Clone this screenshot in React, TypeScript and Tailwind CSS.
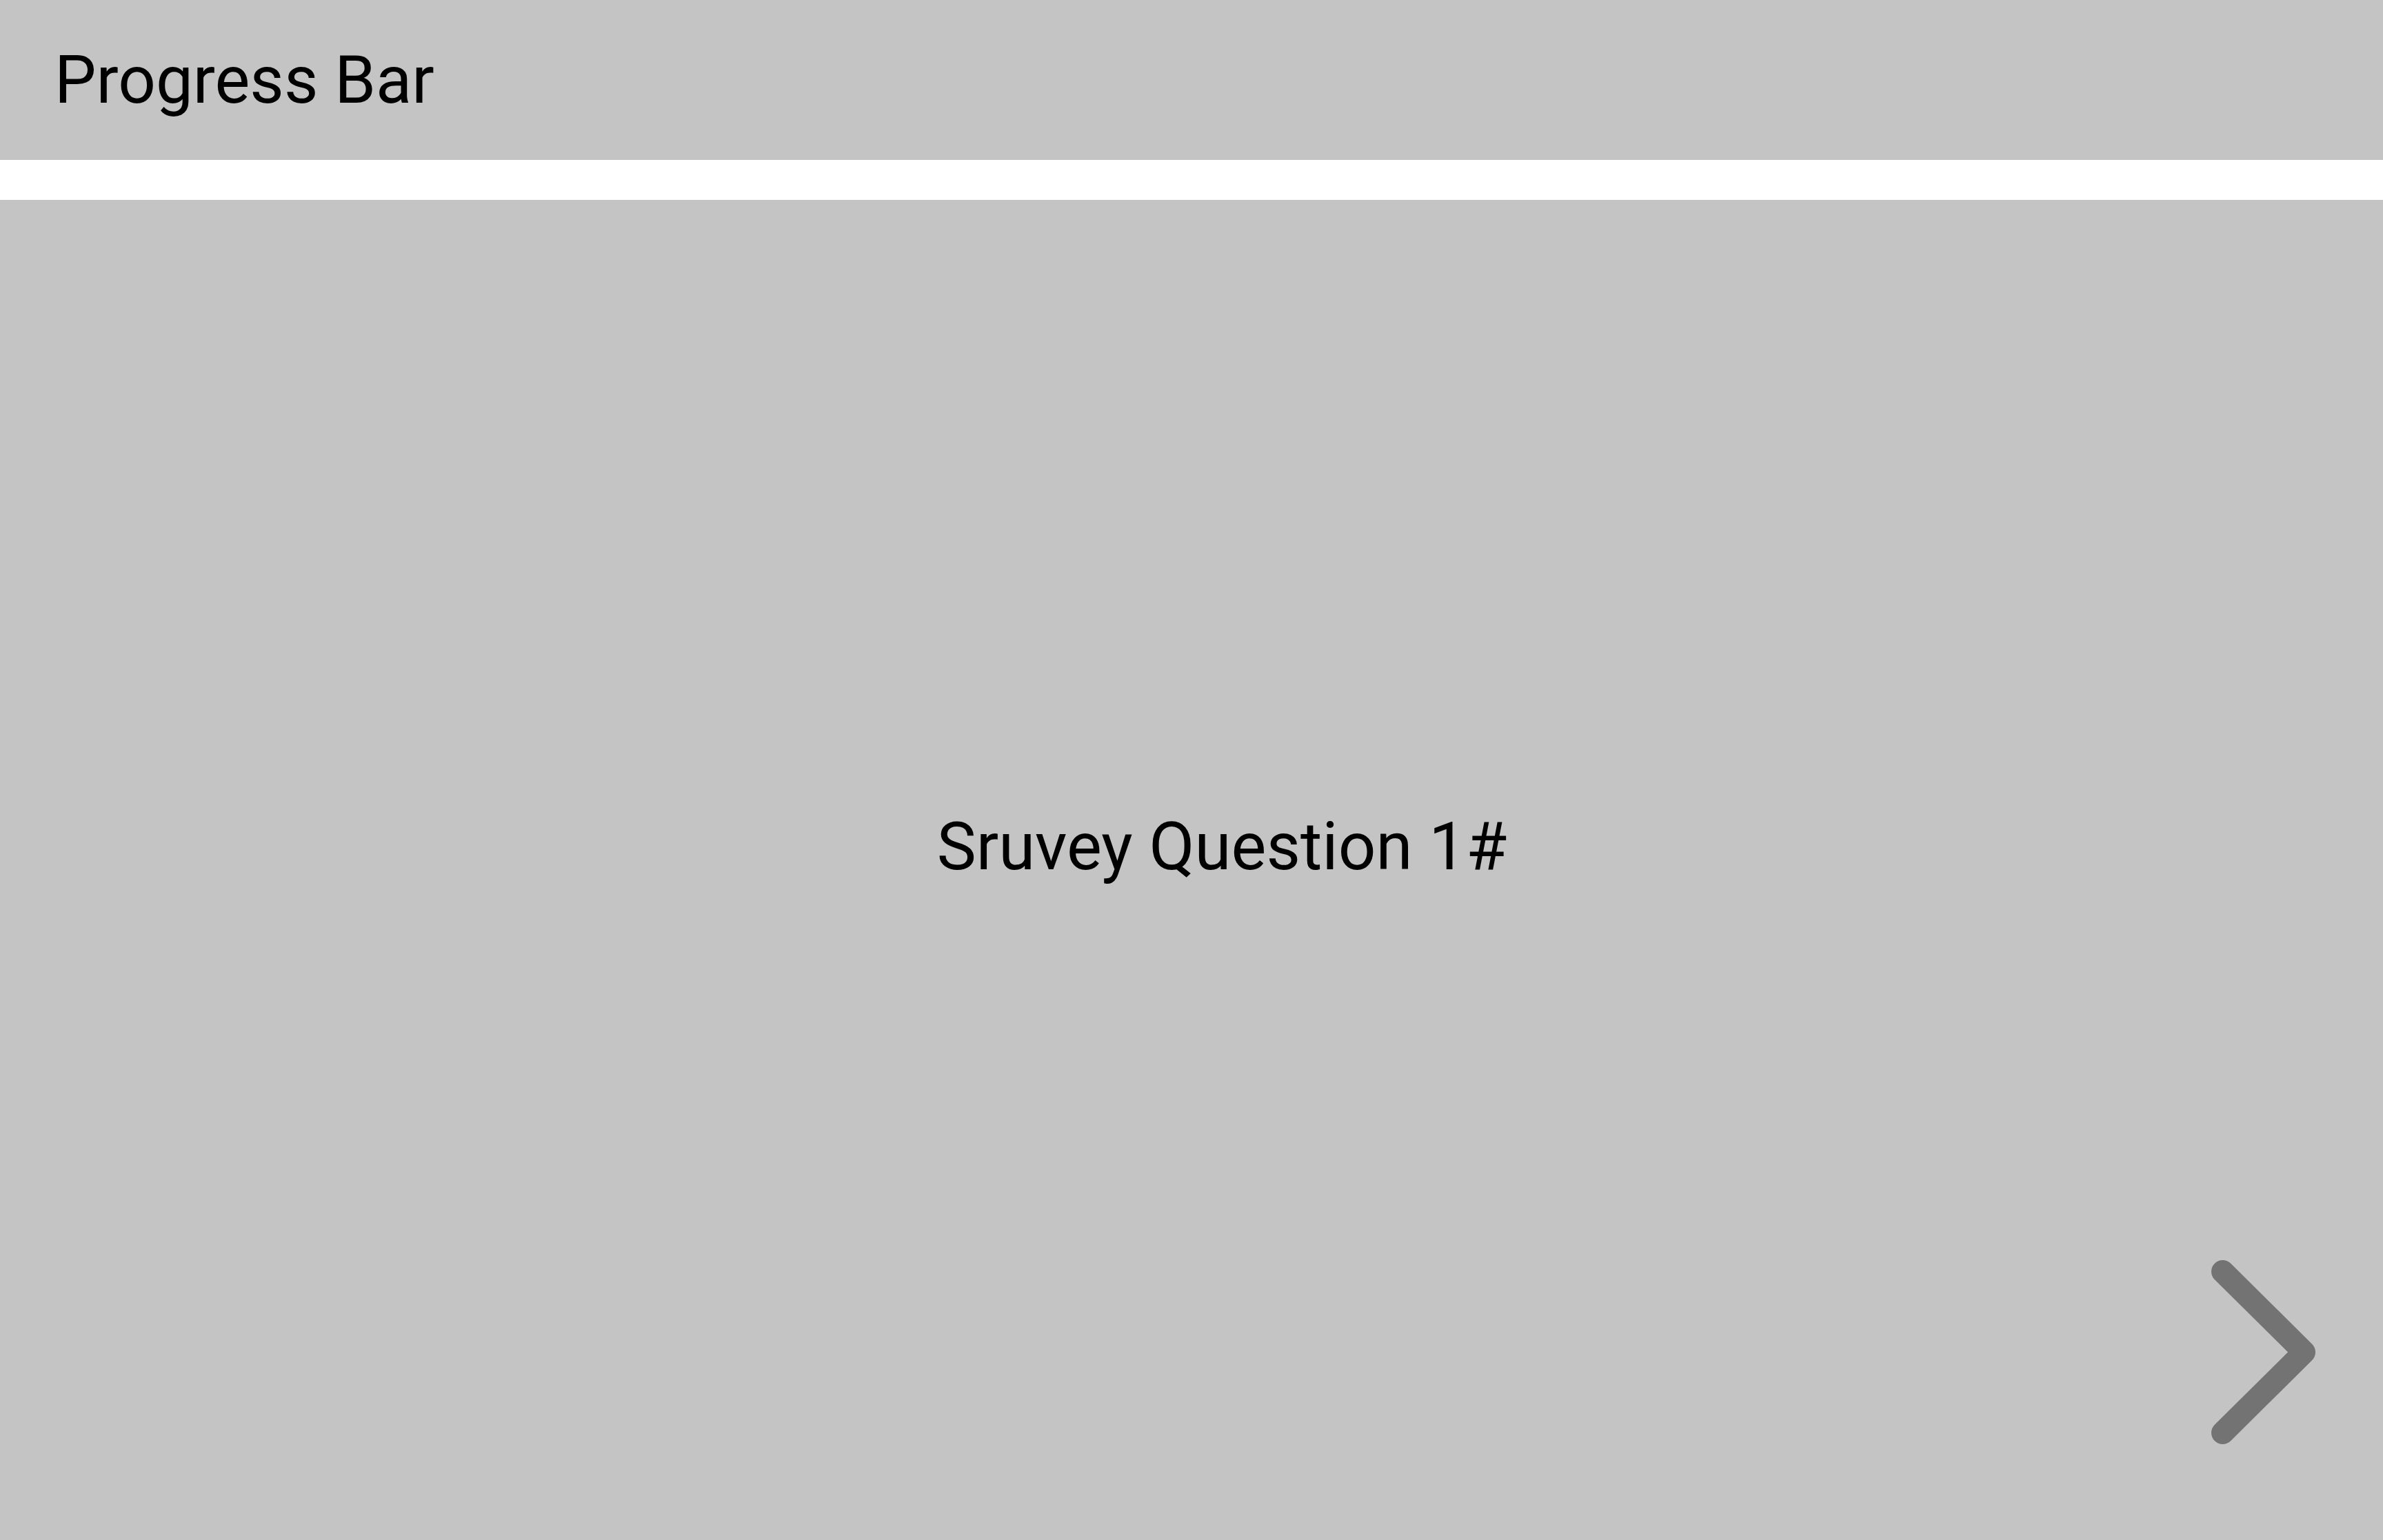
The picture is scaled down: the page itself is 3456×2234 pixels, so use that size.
import React from "react";

const ChevronRight: React.FC<{ className?: string }> = ({ className }) => (
  <svg viewBox="0 0 152 267" className={className} fill="none">
    <polyline
      points="16.5,16.5 134.5,133.5 16.5,250.5"
      stroke="#737373"
      strokeWidth="33"
      strokeLinecap="round"
      strokeLinejoin="round"
    />
  </svg>
);

export default function App() {
  return (
    <div className="h-screen w-full flex flex-col bg-white font-['Roboto',sans-serif] text-black">
      {/* Header */}
      <header className="h-[232px] shrink-0 bg-[#c4c4c4] flex items-center pl-[79px]">
        <h1 className="text-[96px] leading-none font-normal">Progress Bar</h1>
      </header>

      {/* Progress track */}
      <div className="h-[58px] shrink-0 bg-white" />

      {/* Question area */}
      <main className="relative flex-1 bg-[#c4c4c4] flex items-center justify-center pl-[88px] pb-[68px]">
        <p className="text-[96px] leading-none">Sruvey Question 1#</p>
        <button className="absolute right-[97px] bottom-[139px] w-[152px] h-[267px]" aria-label="Next question">
          <ChevronRight className="w-full h-full" />
        </button>
      </main>
    </div>
  );
}
